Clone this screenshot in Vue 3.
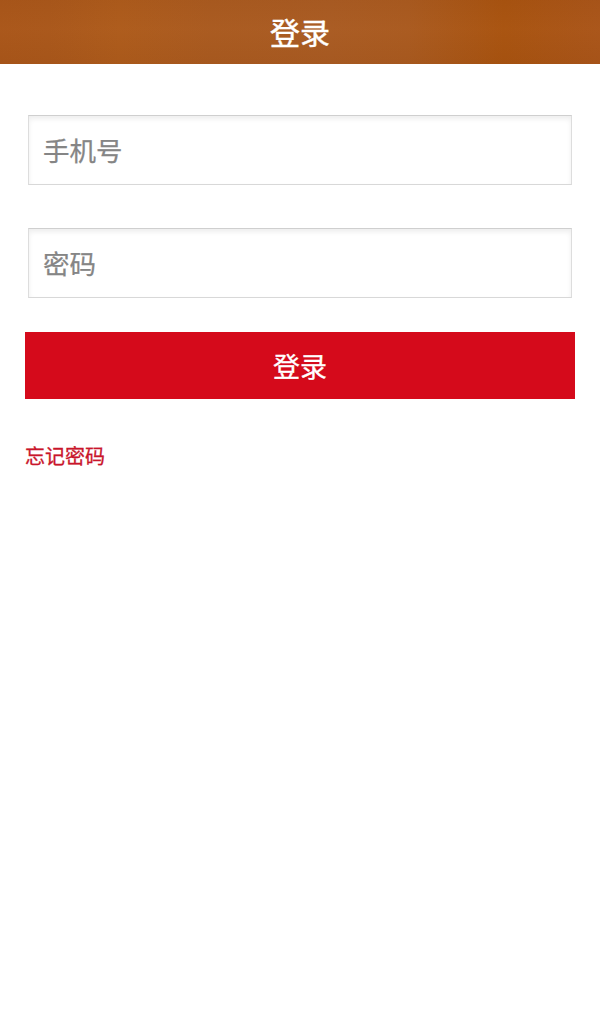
<script setup>
const title = '登录'
</script>

<template>
  <div class="page">
    <header class="header"><h1 class="title">{{ title }}</h1></header>
    <main class="form">
      <div class="fields">
        <input class="field" type="text" placeholder="手机号" />
        <input class="field" type="password" placeholder="密码" />
      </div>
      <button class="submit" type="button">{{ title }}</button>
      <a class="forgot" href="#">忘记密码</a>
    </main>
  </div>
</template>

<style scoped>
.page {
  min-height: 1023px;
  background: #fff;
  font-family: "Noto Sans CJK SC", "Liberation Sans", sans-serif;
}
.header {
  height: 64px;
  display: flex;
  align-items: center;
  justify-content: center;
  background:
    linear-gradient(180deg, rgba(120, 60, 10, 0.05), rgba(255, 190, 110, 0.02) 45%, rgba(110, 50, 0, 0.06)),
    linear-gradient(90deg, #a9561a 0%, #a9571b 8%, #ad5b1c 20%, #a95a20 35%, #a95b23 55%, #a95a20 68%, #a85310 84%, #a9551a 100%);
}
.title {
  margin: 0 0 3px;
  font-size: 30px;
  font-weight: 400;
  line-height: 1;
  color: #fff;
  -webkit-text-stroke: 0.4px #fff;
}
.form {
  padding: 51px 25px 0;
  display: flex;
  flex-direction: column;
}
.fields {
  padding: 0 3px;
  display: flex;
  flex-direction: column;
  gap: 43px;
}
.field {
  display: block;
  box-sizing: border-box;
  width: 100%;
  height: 70px;
  padding: 0 14px 2px;
  border: 1px solid #ddd;
  border-top-color: #cfcfcf;
  border-bottom-color: #d8d8d8;
  border-radius: 0;
  outline: none;
  background: #fff;
  box-shadow: inset 0 3px 5px rgba(0, 0, 0, 0.07);
  font: inherit;
  font-size: 26.5px;
  color: #333;
}
.field::placeholder {
  color: #858585;
  opacity: 1;
  -webkit-text-stroke: 0.25px #858585;
}
.submit {
  margin-top: 34px;
  height: 67px;
  border: 0;
  border-radius: 0;
  background: #d50a1b;
  color: #fff;
  font: inherit;
  font-size: 27px;
  line-height: 1;
  -webkit-text-stroke: 0.3px #fff;
}
.forgot {
  margin-top: 43px;
  align-self: flex-start;
  font-size: 20px;
  line-height: 28px;
  color: #c9152b;
  text-decoration: none;
  -webkit-text-stroke: 0.3px #c9152b;
}
</style>

<style>
html, body { margin: 0; background: #fff; }
</style>
